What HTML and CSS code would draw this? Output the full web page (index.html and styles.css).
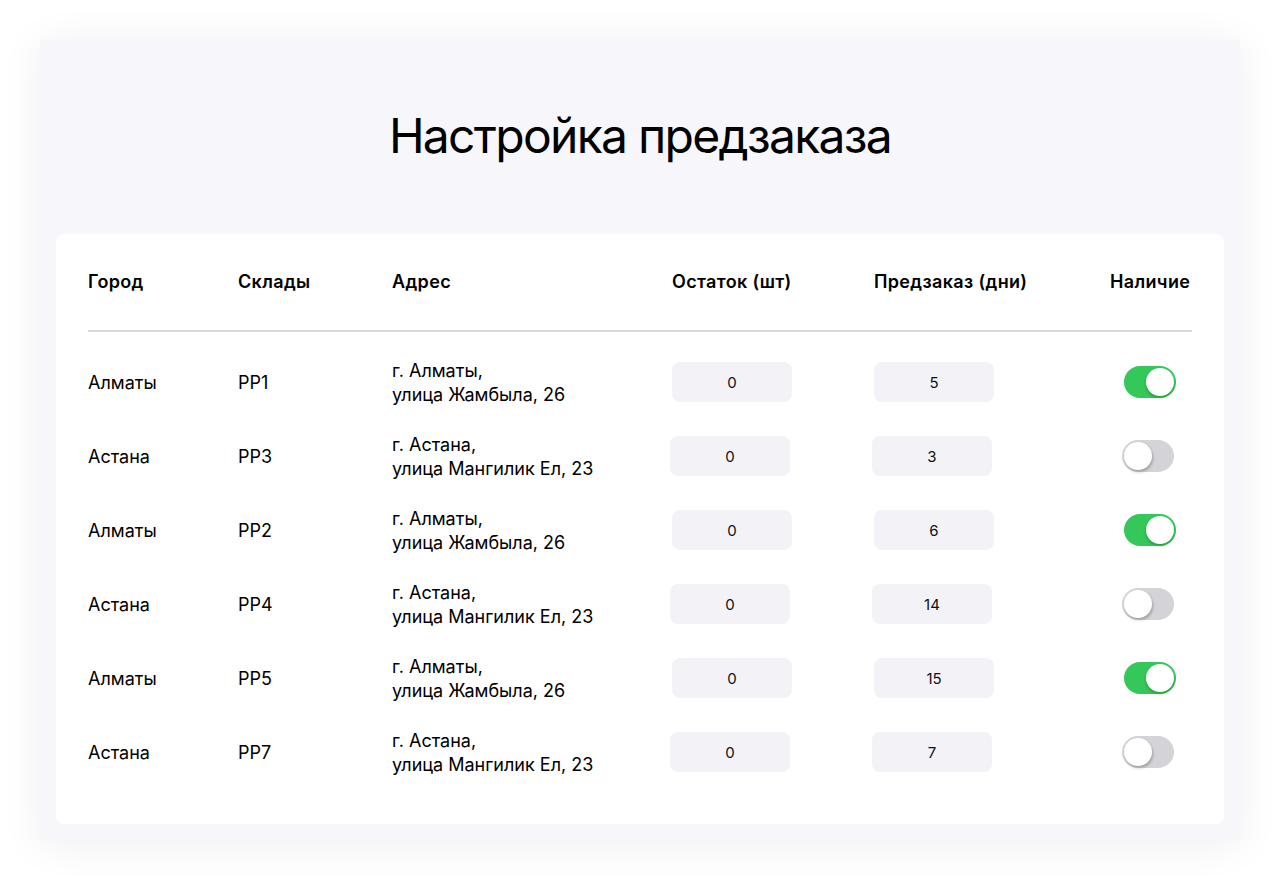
FILE: index.html
```html
<!DOCTYPE html>
<html lang="ru">
<head>
<meta charset="utf-8">
<title>Настройка предзаказа</title>
<link rel="stylesheet" href="styles.css">
</head>
<body>
<main class="panel">
  <h1 class="title">Настройка предзаказа</h1>
  <section class="card">
    <div class="grid head">
      <div>Город</div>
      <div>Склады</div>
      <div>Адрес</div>
      <div>Остаток (шт)</div>
      <div>Предзаказ (дни)</div>
      <div>Наличие</div>
    </div>
    <div class="divider"></div>

    <div class="grid row">
      <div>Алматы</div>
      <div>PP1</div>
      <div class="addr">г. Алматы,<br>улица Жамбыла, 26</div>
      <div><input class="field" type="text" value="0" readonly></div>
      <div><input class="field" type="text" value="5" readonly></div>
      <div><span class="switch switch--on"><span class="knob"></span></span></div>
    </div>
    <div class="grid row row--alt">
      <div>Астана</div>
      <div>PP3</div>
      <div class="addr">г. Астана,<br>улица Мангилик Ел, 23</div>
      <div><input class="field" type="text" value="0" readonly></div>
      <div><input class="field" type="text" value="3" readonly></div>
      <div><span class="switch"><span class="knob"></span></span></div>
    </div>
    <div class="grid row">
      <div>Алматы</div>
      <div>PP2</div>
      <div class="addr">г. Алматы,<br>улица Жамбыла, 26</div>
      <div><input class="field" type="text" value="0" readonly></div>
      <div><input class="field" type="text" value="6" readonly></div>
      <div><span class="switch switch--on"><span class="knob"></span></span></div>
    </div>
    <div class="grid row row--alt">
      <div>Астана</div>
      <div>PP4</div>
      <div class="addr">г. Астана,<br>улица Мангилик Ел, 23</div>
      <div><input class="field" type="text" value="0" readonly></div>
      <div><input class="field" type="text" value="14" readonly></div>
      <div><span class="switch"><span class="knob"></span></span></div>
    </div>
    <div class="grid row">
      <div>Алматы</div>
      <div>PP5</div>
      <div class="addr">г. Алматы,<br>улица Жамбыла, 26</div>
      <div><input class="field" type="text" value="0" readonly></div>
      <div><input class="field" type="text" value="15" readonly></div>
      <div><span class="switch switch--on"><span class="knob"></span></span></div>
    </div>
    <div class="grid row row--alt">
      <div>Астана</div>
      <div>PP7</div>
      <div class="addr">г. Астана,<br>улица Мангилик Ел, 23</div>
      <div><input class="field" type="text" value="0" readonly></div>
      <div><input class="field" type="text" value="7" readonly></div>
      <div><span class="switch"><span class="knob"></span></span></div>
    </div>
  </section>
</main>
</body>
</html>
```
FILE: styles.css
```css
* { box-sizing: border-box; }
html, body { margin: 0; padding: 0; background: #ffffff; }
body {
  font-family: Inter, "Noto Sans", sans-serif;
  color: #000;
  padding: 40px;
}
.panel {
  width: 1200px;
  height: 800px;
  background: #f7f7fb;
  box-shadow: 0 4px 40px rgba(0, 0, 0, 0.07);
  padding: 0 16px 16px;
  display: flex;
  flex-direction: column;
}
.title {
  margin: 0;
  height: 194px;
  display: flex;
  align-items: center;
  justify-content: center;
  font-size: 48px;
  font-weight: 400;
  letter-spacing: -1.7px;
  padding-bottom: 4px;
}
.card {
  flex: 1;
  background: #fff;
  border-radius: 8px;
  padding: 0 32px;
}
.grid {
  display: grid;
  grid-template-columns: 150px 154px 280px 202px 236px 82px;
  align-items: center;
  font-size: 18px;
}
.head {
  height: 96px;
  font-weight: 600;
  letter-spacing: 0.35px;
  padding-bottom: 2px;
}
.divider {
  height: 2px;
  background: #d9d9d9;
  margin-bottom: 13px;
}
.row {
  height: 74px;
}
.addr {
  line-height: 24px;
  padding-top: 2px;
}
.field {
  display: block;
  width: 120px;
  height: 40px;
  border: none;
  border-radius: 8px;
  background: #f2f2f7;
  text-align: center;
  font-family: Inter, "Noto Sans", sans-serif;
  font-size: 15px;
  color: #111;
  padding: 0;
  outline: none;
}
.switch {
  display: flex;
  align-items: center;
  justify-content: flex-start;
  width: 52px;
  height: 32px;
  border-radius: 16px;
  background: #d3d3d8;
  padding: 2px;
  margin-left: 14px;
}
.switch--on {
  justify-content: flex-end;
  background: #34c759;
}
.knob {
  width: 28px;
  height: 28px;
  border-radius: 50%;
  background: #fff;
  box-shadow: 1px 2px 3px rgba(0, 0, 0, 0.25);
}
.switch--on .knob {
  box-shadow: 0 2px 3px rgba(0, 90, 20, 0.35);
}
.row--alt .field { margin-left: -2px; }
.row--alt .switch { margin-left: 12px; }
```
